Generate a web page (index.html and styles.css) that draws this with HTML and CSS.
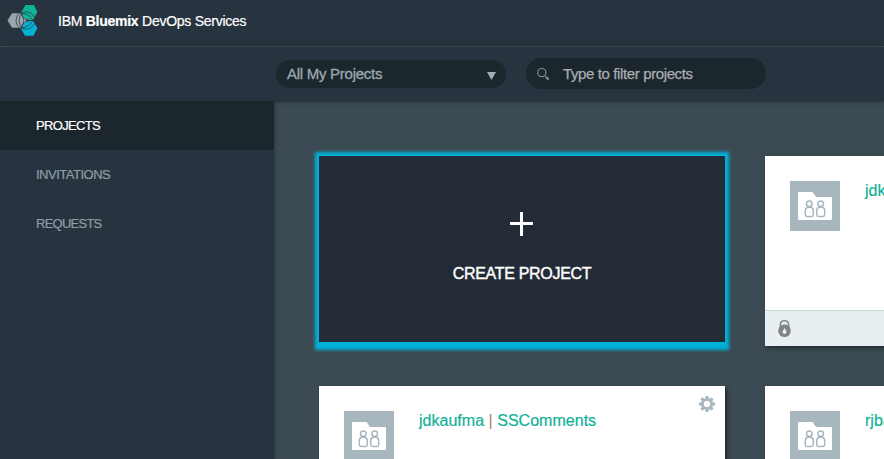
FILE: index.html
```html
<!DOCTYPE html>
<html lang="en">
<head>
<meta charset="utf-8">
<title>IBM Bluemix DevOps Services</title>
<link rel="stylesheet" href="styles.css">
</head>
<body>
<svg class="symbols" aria-hidden="true">
  <symbol id="folder" viewBox="0 0 50 50">
    <path fill="#fff" d="M9 11h12.500c1 0 1.500.4 2 1.200L26 16h15q1 0 1 1v21q0 1-1 1H9q-1 0-1-1V12q0-1 1-1z"/>
    <g fill="none" stroke="#a8b6bd" stroke-width="1.500">
      <circle cx="19.300" cy="22.800" r="2.800"/>
      <circle cx="30.700" cy="22.800" r="2.800"/>
      <path d="M17.500 26.200q-2.200.8-2.200 3.600v4q0 1.700 1.700 1.700h4.600q1.700 0 1.700-1.700v-4q0-2.800-2.200-3.600zM28.900 26.200q-2.200.8-2.200 3.600v4q0 1.700 1.700 1.700H33q1.700 0 1.700-1.700v-4q0-2.800-2.200-3.600z"/>
    </g>
  </symbol>
</svg>
<header class="topbar">
  <svg class="logo" viewBox="0 0 32 32" width="32" height="32">
    <path fill="#98a5ad" d="M5 9.300h9.500q4.500 1 5 7.200-.5 6-5 7.200H5L.5 16.500z"/>
    <path fill="#10b297" d="M18.500 1h8.500l3.300 7-4.500 8.500q-5 .5-8.500-3L14 8.500z"/>
    <path fill="#06b1d6" d="M17.300 19.500q3.500-3.500 8.500-3l4.500 7.500-3.800 7.700H18l-4-7z"/>
    <g fill="none" stroke="#26343f" stroke-width=".7">
      <path d="M12 9.300Q6 16.500 12 23.700M14.500 9.300Q10 16.500 14.500 23.700M14.500 9.300Q19 16.500 14.500 23.700"/>
      <path d="M14 9Q23 5 27.500 13.500M14 9.500Q21 8.500 26 16.500M14 9.500Q17 17.500 26 16.500"/>
      <path d="M14 24Q23 28 27.500 19.500M14 23.500Q21 24.500 26 16.500M14 23.500Q17 15.500 26 16.500"/>
    </g>
  </svg>
  <span class="brand">IBM <b>Bluemix</b> DevOps Services</span>
</header>
<div class="toolbar">
  <div class="picker"><span class="picker-label">All My Projects</span><svg width="9" height="8" viewBox="0 0 9 8"><path fill="#a1b0b7" d="M0 0h9L4.500 8z"/></svg></div>
  <div class="search"><svg width="13" height="13" viewBox="0 0 13 13" fill="none" stroke="#84929a"><circle cx="4.800" cy="4.600" r="4.100" stroke-width="1.100"/><path d="M7.800 7.800l1.200 1.200" stroke-width="1"/><path d="M9 9l2.600 2.500" stroke-width="2.200"/></svg><span class="search-text">Type to filter projects</span></div>
</div>
<div class="layout">
  <nav class="sidebar">
    <a class="nav-item active"><span class="nav-projects">PROJECTS</span></a>
    <a class="nav-item"><span class="nav-invitations">INVITATIONS</span></a>
    <a class="nav-item"><span class="nav-requests">REQUESTS</span></a>
  </nav>
  <main class="cards">
    <section class="card create">
      <svg width="24" height="24" viewBox="0 0 24 24"><path fill="#fff" d="M10 0h3v10h10v3H13v11h-3V13H0v-3h10z"/></svg>
      <span class="create-label">CREATE PROJECT</span>
    </section>
    <section class="card">
      <div class="card-body"><svg class="avatar"><use href="#folder"/></svg><span class="name">jdka</span></div>
      <div class="card-foot"><svg width="13" height="17" viewBox="0 0 13 17"><path d="M2.400 8V5Q2.400.8 6.500.8T10.600 5v3" fill="none" stroke="#84888b" stroke-width="1.600"/><circle cx="6.500" cy="10.700" r="6.300" fill="#808487"/><path d="M6.500 7.200Q6.700 9.300 8 10.600q.8 1.200.2 2.200-.6 1.200-1.700 1.200t-1.700-1.200q-.6-1 .2-2.200Q6.300 9.300 6.500 7.200z" fill="#e8eff2"/></svg></div>
    </section>
    <section class="card">
      <div class="card-body"><svg class="avatar"><use href="#folder"/></svg><span class="name">jdkaufma <i class="bar">|</i> SSComments</span>
        <svg class="gear" width="16" height="16" viewBox="-8 -8 16 16"><g fill="#a9b8c1"><g id="teeth"><path d="M-1.500-8h3l.5 4h-4zM-1.500 8h3l.5-4h-4zM-8-1.500v3l4 .5v-4zM8-1.500v3l-4 .5v-4z"/></g><use href="#teeth" transform="rotate(45)"/></g><circle r="4.400" fill="none" stroke="#a9b8c1" stroke-width="2.800"/><circle r="3" fill="#fff"/></svg>
      </div>
    </section>
    <section class="card">
      <div class="card-body"><svg class="avatar"><use href="#folder"/></svg><span class="name">rjba</span></div>
    </section>
  </main>
</div>
</body>
</html>
```
FILE: styles.css
```css
* { box-sizing: border-box; }
body {
  margin: 0;
  height: 459px;
  overflow: hidden;
  background: #3c4b53;
  font-family: "Liberation Sans", Arial, sans-serif;
  display: flex;
  flex-direction: column;
}
span { white-space: nowrap; }
svg { flex: none; display: block; }
.symbols { position: absolute; width: 0; height: 0; }
.topbar {
  flex: none;
  height: 47px;
  background: #27343f;
  border-bottom: 1px solid #36544f;
  display: flex;
  align-items: flex-start;
  padding: 4px 0 0 7px;
}
.brand {
  margin: 8px 0 0 19px;
  font-size: 14px;
  line-height: 18px;
  letter-spacing: -0.26px;
  color: #fff;
  -webkit-text-stroke: .2px #fff;
}
.toolbar {
  flex: none;
  height: 54px;
  background: #27343f;
  box-shadow: 0 1px 4px rgba(20, 30, 36, .65);
  display: flex;
  align-items: flex-start;
  padding: 11px 0 0 276px;
  gap: 20px;
}
.picker {
  width: 230px;
  height: 28px;
  margin-top: 2px;
  border-radius: 14px;
  background: #1c262d;
  display: flex;
  justify-content: space-between;
  align-items: center;
  padding: 0 10px 0 11px;
  color: #9caab0;
  font-size: 15px;
  -webkit-text-stroke: .3px #9caab0;
}
.picker svg { margin-top: 4px; }
.picker-label { letter-spacing: -0.27px; margin-top: -1px; }
.search {
  width: 240px;
  height: 31px;
  border-radius: 16px;
  background: #1c262d;
  display: flex;
  align-items: center;
  padding-left: 11px;
  color: #a9aeb0;
  font-size: 15px;
  -webkit-text-stroke: .25px #a9aeb0;
}
.search svg { margin-top: 2px; }
.search-text { margin: -1px 0 0 13px; letter-spacing: -0.38px; }
.layout { flex: 1; min-height: 0; display: flex; position: relative; }
.sidebar {
  flex: none;
  width: 274px;
  background: #27343f;
  box-shadow: 1px 2px 3px rgba(20, 30, 36, .45);
}
.nav-item {
  height: 49px;
  display: flex;
  align-items: center;
  padding-left: 36px;
  font-size: 13px;
  color: #8e9da5;
  -webkit-text-stroke: .2px currentColor;
}
.nav-item.active { background: #1c262d; color: #fff; }
.nav-projects { letter-spacing: -0.65px; }
.nav-invitations { letter-spacing: -0.5px; }
.nav-requests { letter-spacing: -0.75px; }
.cards {
  flex: 1;
  min-width: 0;
  overflow: hidden;
  display: grid;
  grid-template-columns: 406px 406px;
  grid-auto-rows: 190px;
  gap: 40px;
  padding: 55px 0 0 45px;
}
.card {
  background: #fff;
  box-shadow: 2px 2px 4px rgba(10, 18, 22, .6);
  display: flex;
  flex-direction: column;
}
.create {
  background: #232c36;
  border-bottom: 4px solid #00b0d5;
  box-shadow: 0 0 3px 4px #00b0d5;
  align-items: center;
  padding-top: 56px;
}
.create-label {
  margin-top: 28px;
  font-size: 16px;
  line-height: 20px;
  letter-spacing: -0.3px;
  color: #fff;
  -webkit-text-stroke: .4px #fff;
}
.card-body {
  flex: 1;
  display: flex;
  align-items: flex-start;
  padding: 25px 10px 0 25px;
}
.avatar { width: 50px; height: 50px; background: #a8b6bd; }
.name {
  margin: 0 0 0 25px;
  font-size: 16px;
  line-height: 20px;
  letter-spacing: .02px;
  color: #10b197;
  -webkit-text-stroke: .2px #10b197;
}
.bar { font-style: normal; color: #a18166; -webkit-text-stroke: 0; }
.gear { margin: -15px 0 0 auto; }
.card-foot {
  height: 36px;
  background: #e8eff2;
  border-top: 1px solid #c9d4d9;
  padding: 9px 0 0 13px;
}
```
